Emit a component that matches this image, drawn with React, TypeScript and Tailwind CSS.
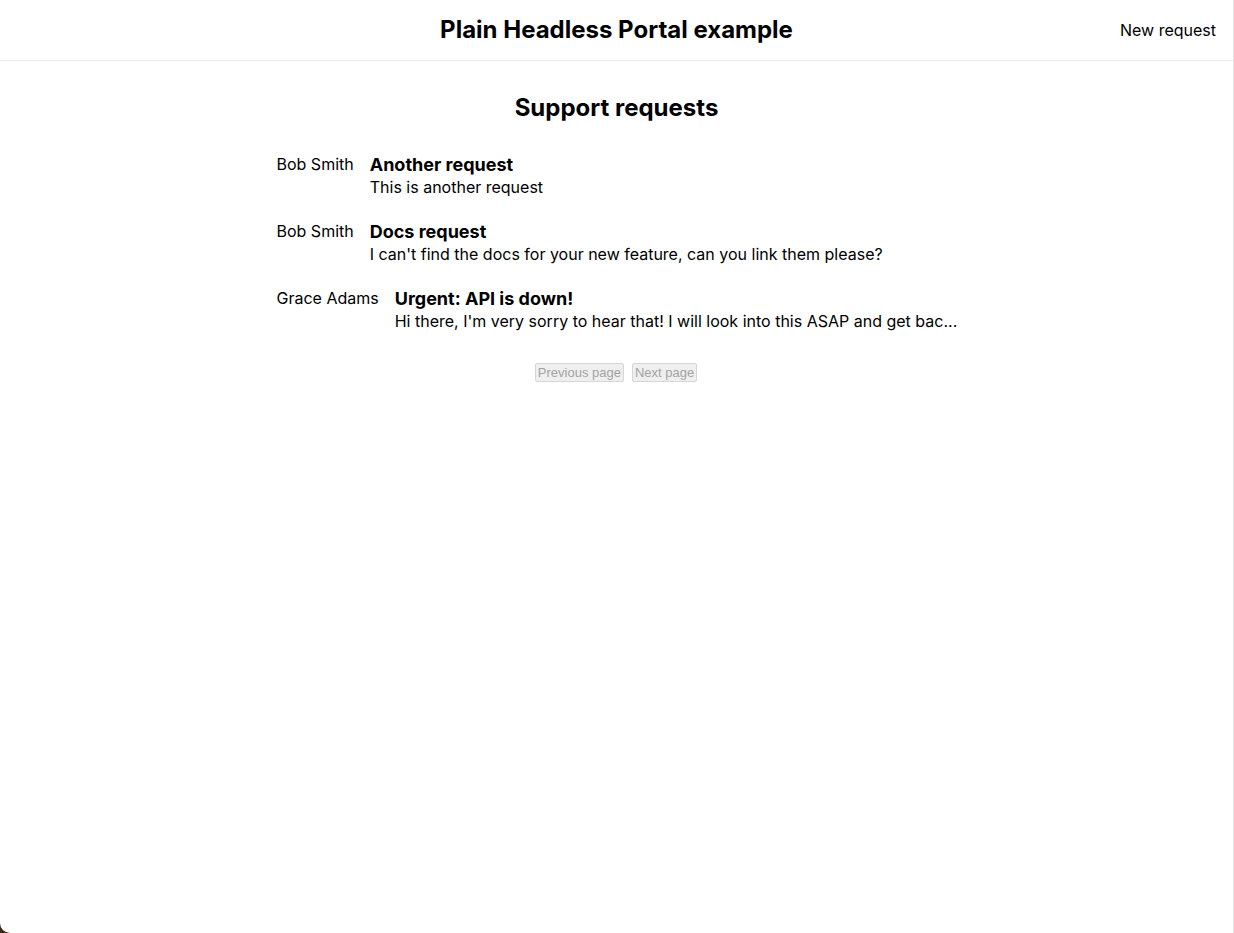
const requests = [
  { id: "1", author: "Bob Smith", title: "Another request", body: "This is another request" },
  {
    id: "2",
    author: "Bob Smith",
    title: "Docs request",
    body: "I can't find the docs for your new feature, can you link them please?",
  },
  {
    id: "3",
    author: "Grace Adams",
    title: "Urgent: API is down!",
    body: "Hi there, I'm very sorry to hear that! I will look into this ASAP and get bac...",
  },
];

export default function App() {
  return (
    <div className="h-screen bg-[#3b2a17]">
      <div
        className="h-full bg-white border-r border-[#e3e3e3] rounded-bl-[10px] text-black"
        style={{ fontFamily: "Inter, 'Noto Sans', sans-serif" }}
      >
        {/* header */}
        <header className="relative flex items-center justify-center h-[61px] border-b border-[#ebebeb]">
          <h1 className="text-2xl font-bold">Plain Headless Portal example</h1>
          <a className="absolute right-[17px] top-[18px] text-base leading-6">New request</a>
        </header>

        <main className="max-w-[680px] mx-auto pt-[31px]">
          <h2 className="text-2xl font-bold text-center">Support requests</h2>

          <div className="mt-[28px] flex flex-col gap-5">
            {requests.map((r) => (
              <div key={r.id} className="flex gap-4 items-start">
                <div className="text-base leading-6 whitespace-nowrap">{r.author}</div>
                <div className="min-w-0 pt-[3px]">
                  <div className="text-lg font-bold leading-5">{r.title}</div>
                  <div className="text-base leading-6 whitespace-nowrap">{r.body}</div>
                </div>
              </div>
            ))}
          </div>

          <div className="flex justify-center gap-2 mt-[30px] pr-[1px]">
            <button
              disabled
              className="px-[2px] h-[19px] text-[13px] leading-4 text-[#a3a3a3] bg-[#efefef] border border-[#d6d6d6] rounded-[2px]"
              style={{ fontFamily: "'Liberation Sans', Arial, sans-serif" }}
            >
              Previous page
            </button>
            <button
              disabled
              className="px-[2px] h-[19px] text-[13px] leading-4 text-[#a3a3a3] bg-[#efefef] border border-[#d6d6d6] rounded-[2px]"
              style={{ fontFamily: "'Liberation Sans', Arial, sans-serif" }}
            >
              Next page
            </button>
          </div>
        </main>
      </div>
    </div>
  );
}
